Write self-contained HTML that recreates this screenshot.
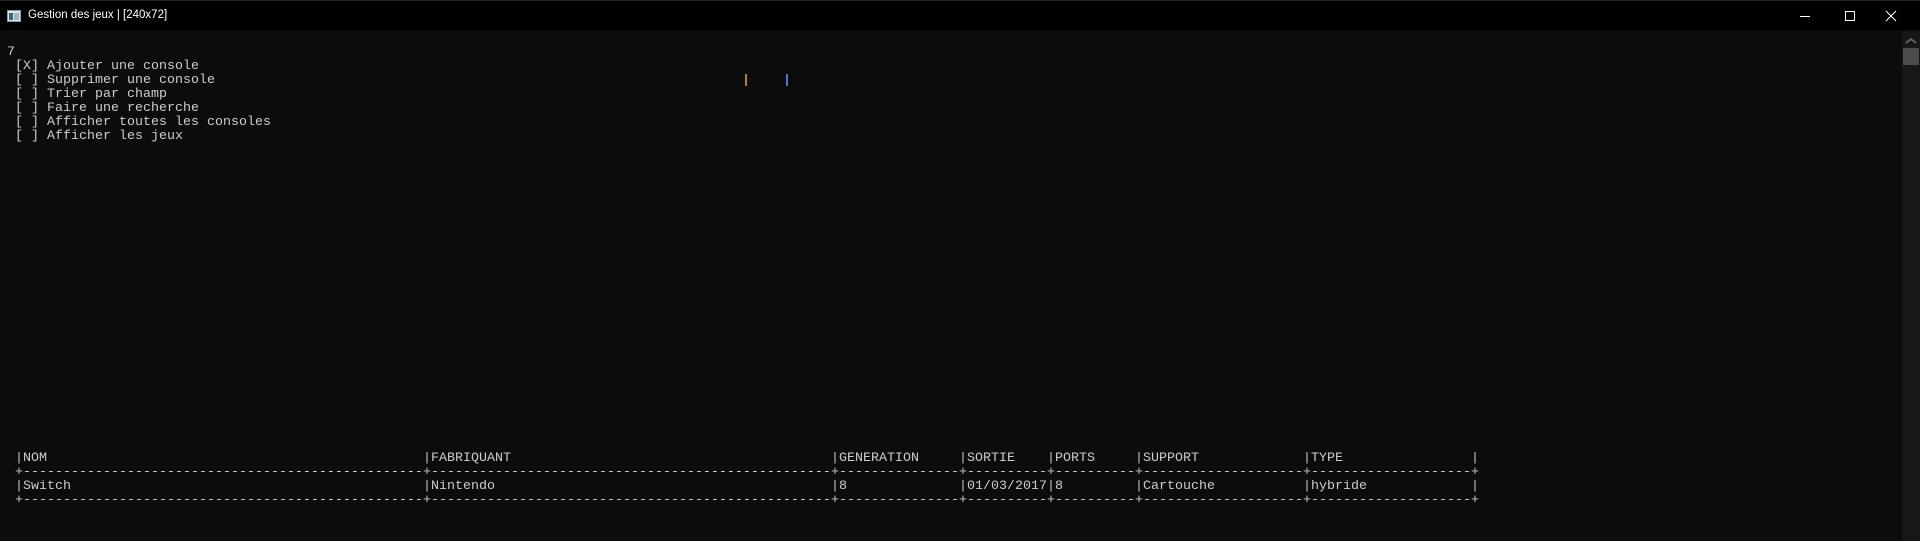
<!DOCTYPE html>
<html><head><meta charset="utf-8"><style>
*{margin:0;padding:0;box-sizing:border-box}
body{width:1920px;height:541px;background:#0c0c0c;overflow:hidden;position:relative;font-family:"Liberation Mono",monospace;font-size:13.33px;color:#cccccc}
.tb{position:absolute;left:0;top:0;width:1920px;height:30px;background:#000;border-top:1px solid #222}
.tt{position:absolute;left:28px;top:8px;font-family:"Liberation Sans",sans-serif;font-size:11.5px;color:#fff}
.ln{position:absolute;left:7px;height:14px;line-height:14px;white-space:pre}
.row{position:absolute;left:15px;height:14px;line-height:14px;white-space:pre;display:flex}
.row span{display:inline-block;overflow:hidden;white-space:pre}
.d{color:#bdbdbd;letter-spacing:0}
i{font-style:normal;color:#c8c2b8}
.sb{position:absolute;left:1902px;top:31px;width:18px;height:510px;background:#171717}
</style></head><body>
<div class="tb">
<svg style="position:absolute;left:7px;top:9px" width="14" height="12"><rect x="0.5" y="0.5" width="13" height="11" fill="#dfe6ea" stroke="#8a9aa4"/><rect x="2" y="3" width="4" height="7" fill="#2e6c7a"/><rect x="7" y="3" width="5" height="7" fill="#9fb4bd"/></svg>
<div class="tt">Gestion des jeux | [240x72]</div>
<svg style="position:absolute;left:1795px;top:9px" width="120" height="14"><line x1="5" y1="6.5" x2="15" y2="6.5" stroke="#fff"/><rect x="50.5" y="1.5" width="9" height="9" fill="none" stroke="#fff"/><path d="M91 1 L101 11 M101 1 L91 11" stroke="#fff" stroke-width="1.1"/></svg>
</div>
<div class="sb"><svg style="position:absolute;left:3px;top:6px" width="12" height="8"><path d="M1 6 L6 2 L11 6" stroke="#666" stroke-width="1.8" fill="none"/></svg><div style="position:absolute;left:1px;top:17px;width:16px;height:17px;background:#4d4d4d"></div></div>

<div class="ln" style="top:46px">7</div>
<div class="ln" style="top:60px"> [X] Ajouter une console</div>
<div class="ln" style="top:74px"> [ ] Supprimer une console</div>
<div class="ln" style="top:88px"> [ ] Trier par champ</div>
<div class="ln" style="top:102px"> [ ] Faire une recherche</div>
<div class="ln" style="top:116px"> [ ] Afficher toutes les consoles</div>
<div class="ln" style="top:130px"> [ ] Afficher les jeux</div>
<div style="position:absolute;left:745px;top:74px;width:2px;height:12px;background:#c0783a"></div>
<div style="position:absolute;left:786px;top:74px;width:2px;height:12px;background:#3c80c8"></div>

<div class="row" style="top:452px"><span style="width:408px"><i>|</i>NOM</span><span style="width:408px"><i>|</i>FABRIQUANT</span><span style="width:128px"><i>|</i>GENERATION</span><span style="width:88px"><i>|</i>SORTIE</span><span style="width:88px"><i>|</i>PORTS</span><span style="width:168px"><i>|</i>SUPPORT</span><span style="width:168px"><i>|</i>TYPE</span><span><i>|</i></span></div>
<div class="row" style="top:466px"><span style="width:408px">+--------------------------------------------------</span><span style="width:408px">+--------------------------------------------------</span><span style="width:128px">+---------------</span><span style="width:88px">+----------</span><span style="width:88px">+----------</span><span style="width:168px">+--------------------</span><span style="width:168px">+--------------------</span><span>+</span></div>
<div class="row" style="top:480px"><span style="width:408px"><i>|</i>Switch</span><span style="width:408px"><i>|</i>Nintendo</span><span style="width:128px"><i>|</i>8</span><span style="width:88px"><i>|</i>01/03/2017</span><span style="width:88px"><i>|</i>8</span><span style="width:168px"><i>|</i>Cartouche</span><span style="width:168px"><i>|</i>hybride</span><span><i>|</i></span></div>
<div class="row" style="top:494px"><span style="width:408px">+--------------------------------------------------</span><span style="width:408px">+--------------------------------------------------</span><span style="width:128px">+---------------</span><span style="width:88px">+----------</span><span style="width:88px">+----------</span><span style="width:168px">+--------------------</span><span style="width:168px">+--------------------</span><span>+</span></div>
</body></html>
